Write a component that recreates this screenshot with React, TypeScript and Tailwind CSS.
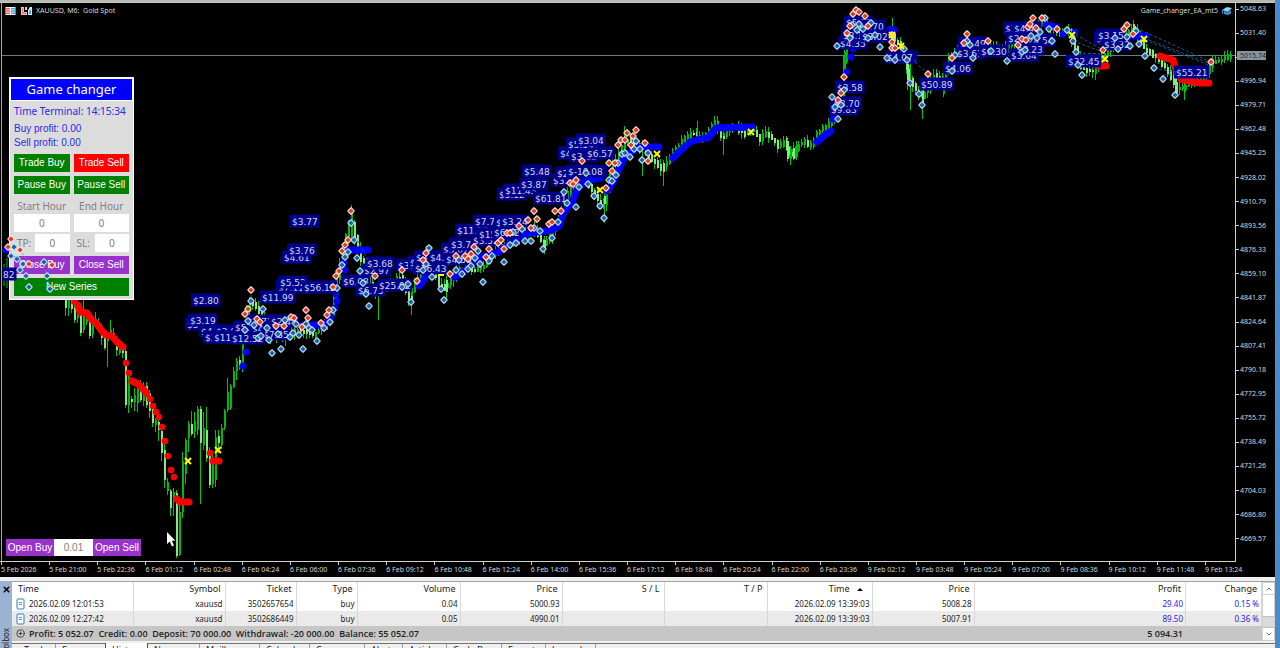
import React from "react";
import { ChevronDown, ChevronUp, CirclePlus, X } from "lucide-react";

type Point = [number, number];

const PRICES = [
  "5048.63", "5031.40", "5014.17", "4996.94", "4979.71", "4962.48", "4945.25", "4928.02",
  "4910.79", "4893.56", "4876.33", "4859.10", "4841.87", "4824.64", "4807.41", "4790.18",
  "4772.95", "4755.72", "4738.49", "4721.26", "4704.03", "4686.80", "4669.57",
];

const TIMES = [
  "5 Feb 2026", "5 Feb 21:00", "5 Feb 22:36", "6 Feb 01:12", "6 Feb 02:48", "6 Feb 04:24",
  "6 Feb 06:00", "6 Feb 07:36", "6 Feb 09:12", "6 Feb 10:48", "6 Feb 12:24", "6 Feb 14:00",
  "6 Feb 15:36", "6 Feb 17:12", "6 Feb 18:48", "6 Feb 20:24", "6 Feb 22:00", "6 Feb 23:36",
  "9 Feb 02:12", "9 Feb 03:48", "9 Feb 05:24", "9 Feb 07:00", "9 Feb 08:36", "9 Feb 10:12",
  "9 Feb 11:48", "9 Feb 13:24",
];

// x, high, low, body top, body bottom, 1 when the candle closed lower
type Candle = [number, number, number, number, number, number];

const CANDLES: Candle[] = [
  [65, 296, 316, 299, 308, 1], [68, 296, 316, 300, 308, 0], [71, 298, 313, 304, 309, 1],
  [74, 303, 323, 308, 320, 1], [77, 308, 323, 312, 318, 0], [80, 312, 336, 314, 333, 1],
  [83, 300, 333, 316, 330, 0], [86, 315, 325, 317, 322, 0], [89, 314, 339, 316, 336, 1],
  [92, 318, 338, 322, 334, 0], [95, 312, 327, 320, 325, 0], [98, 318, 332, 322, 328, 1],
  [101, 324, 345, 326, 338, 1], [104, 330, 350, 332, 348, 1], [107, 333, 367, 335, 341, 0],
  [110, 320, 338, 330, 336, 0], [113, 328, 342, 333, 339, 1], [116, 336, 356, 338, 350, 1],
  [119, 345, 355, 349, 353, 0], [122, 346, 358, 350, 353, 1], [125, 345, 408, 351, 405, 1],
  [128, 370, 413, 374, 405, 0], [131, 396, 408, 399, 402, 1], [134, 388, 411, 395, 402, 0],
  [137, 380, 412, 385, 403, 0], [140, 380, 402, 383, 400, 1], [143, 382, 406, 387, 401, 0],
  [146, 382, 408, 386, 405, 1], [149, 390, 418, 393, 411, 1], [152, 403, 427, 405, 423, 1],
  [155, 418, 432, 420, 425, 0], [158, 418, 441, 422, 430, 1], [161, 428, 461, 431, 453, 1],
  [164, 444, 488, 450, 480, 1], [167, 478, 495, 482, 491, 0], [170, 489, 516, 491, 508, 1],
  [173, 488, 516, 492, 497, 0], [176, 490, 558, 493, 556, 1], [179, 503, 556, 512, 555, 0],
  [182, 452, 518, 461, 512, 0], [185, 438, 484, 440, 474, 0], [188, 421, 452, 424, 438, 0],
  [191, 411, 436, 424, 434, 1], [194, 412, 438, 421, 432, 0], [197, 406, 435, 409, 430, 0],
  [200, 406, 504, 409, 443, 1], [203, 412, 450, 428, 445, 0], [206, 407, 462, 430, 458, 1],
  [209, 447, 488, 453, 485, 1], [212, 452, 488, 460, 484, 0], [215, 430, 487, 437, 480, 0],
  [218, 430, 453, 436, 443, 1], [221, 424, 449, 428, 445, 0], [224, 409, 430, 411, 427, 0],
  [227, 378, 412, 392, 410, 0], [230, 384, 410, 386, 408, 0], [233, 367, 388, 371, 387, 0],
  [236, 358, 380, 361, 371, 0], [239, 356, 370, 360, 366, 1], [242, 340, 372, 344, 366, 0],
];

const MID_LINE: Point[] = [
  [246, 320], [250, 300], [258, 308], [270, 335], [285, 338], [300, 330], [315, 335], [325, 325],
  [333, 312], [337, 285], [342, 260], [347, 235], [351, 216], [356, 238], [362, 260], [370, 282],
  [378, 292], [390, 285], [400, 275], [410, 298], [420, 275], [428, 252], [440, 284], [446, 288],
  [460, 268], [478, 270], [484, 266], [500, 247], [515, 240], [535, 228], [544, 245], [552, 235],
  [560, 222], [570, 190], [585, 176], [595, 195], [604, 208], [612, 172], [620, 152], [628, 140],
  [640, 146], [652, 158], [662, 170], [672, 158], [682, 142], [692, 134], [706, 136], [716, 123],
  [722, 136], [735, 126], [745, 134], [755, 130], [760, 141], [766, 133], [775, 140], [780, 148],
  [785, 141], [790, 154], [795, 155], [800, 144], [805, 141], [810, 147], [820, 131], [832, 122],
  [838, 110], [843, 92], [845, 60], [848, 36], [855, 22], [870, 26], [880, 36], [892, 35],
  [900, 45], [906, 64], [912, 82], [921, 98], [928, 90], [935, 76], [945, 82], [950, 58],
  [965, 46], [985, 46], [1000, 50], [1010, 45], [1030, 32], [1045, 22], [1060, 34], [1070, 30],
  [1076, 48], [1082, 68], [1095, 72], [1105, 56], [1120, 38], [1135, 28], [1145, 48], [1160, 60],
  [1170, 73], [1178, 90], [1195, 82], [1207, 74], [1213, 62], [1222, 60], [1230, 56],
];

const LONG_WICKS: Candle[] = [
  [351, 205, 240, 212, 237, 0], [378, 278, 320, 290, 296, 0], [411, 288, 315, 296, 303, 1],
  [446, 276, 300, 280, 292, 1], [544, 236, 254, 240, 250, 1], [604, 190, 223, 196, 204, 1],
  [624, 126, 150, 140, 146, 0], [642, 140, 176, 144, 150, 1], [663, 160, 186, 163, 172, 1],
  [697, 121, 140, 136, 139, 0], [717, 117, 134, 122, 126, 0], [723, 134, 155, 136, 139, 1],
  [787, 139, 162, 141, 159, 1], [790, 146, 165, 149, 159, 0], [793, 142, 160, 148, 159, 1],
  [796, 141, 160, 144, 157, 0], [844, 50, 96, 52, 74, 0], [892, 18, 44, 30, 40, 1],
  [907, 56, 90, 62, 80, 1], [910, 60, 110, 82, 85, 0], [922, 84, 119, 90, 104, 1],
  [943, 76, 97, 80, 94, 0], [1133, 20, 32, 24, 31, 1], [1175, 60, 96, 66, 92, 1],
  [1184, 80, 100, 86, 89, 0],
];

function noise(i: number) {
  const v = Math.sin(i * 12.9898) * 43758.5453;
  return v - Math.floor(v);
}

function midAt(x: number) {
  for (let i = 1; i < MID_LINE.length; i++) {
    const [x0, y0] = MID_LINE[i - 1];
    const [x1, y1] = MID_LINE[i];
    if (x <= x1) return y0 + ((y1 - y0) * (x - x0)) / (x1 - x0);
  }
  return MID_LINE[MID_LINE.length - 1][1];
}

const SERIES: Candle[] = Array.from({ length: 329 }, (_, i): Candle => {
  const x = 246 + i * 3;
  const before = midAt(x - 1);
  const after = midAt(x + 2);
  const top = Math.min(before, after) - noise(i) * 3;
  const bottom = Math.max(before, after) + noise(i + 400) * 3;
  return [x, top - noise(i + 90) * 6, bottom + noise(i + 700) * 6, top, bottom, after > before ? 1 : 0];
});

const BLUE_TRAILS = [
  "303,325 322,325 328,322 331,317",
  "346,250 368,250",
  "419,286 424,280 428,268",
  "455,277 468,268 478,258 490,255 500,251 516,239 530,233 552,230 559,226 563,214 572,202 577,190 585,181 600,178",
  "607,191 613,182 618,171 623,160 632,151 640,147 659,147",
  "673,158 680,151 690,142 700,139 708,138 716,128 752,127",
  "817,142 824,136 831,131",
  "1046,25 1056,27",
  "1133,36 1146,36",
];

const RED_TRAILS = [
  "78,305 80,312 87,313 91,319 96,323 102,331 106,335 112,336 117,342 123,347",
  "132,381 138,384 144,390",
  "177,499 180,502 189,502",
  "213,461 219,461",
  "1099,66 1106,66",
  "1160,56 1166,58 1173,60 1175,67 1181,79 1190,81 1200,83 1209,83",
];

const BLUE_DOTS: Point[] = [
  [246, 352], [243, 366], [330, 321], [335, 308], [337, 301], [336, 294], [345, 270], [344, 262],
  [833, 119], [836, 117], [847, 72], [851, 57], [853, 49], [890, 29], [894, 30], [1063, 34], [1075, 32],
];

const RED_DOTS: Point[] = [
  [75, 302], [126, 363], [129, 373], [132, 381], [144, 390], [147, 394], [150, 399], [153, 406],
  [156, 412], [159, 417], [162, 427], [165, 441], [168, 456], [171, 470], [174, 477], [210, 453],
];

const CROSSES: Point[] = [
  [188, 461], [218, 450], [600, 190], [657, 154], [751, 132], [892, 35], [901, 46], [1072, 35],
  [1105, 59], [1144, 39],
];

const TAGS: [string, number, number][] = [
  ["$3.77", 292, 221], ["$4.61", 284, 257], ["$3.76", 289, 250], ["$7.11", 278, 287],
  ["$5.52", 280, 282], ["$56.12", 304, 287], ["$11.99", 262, 297], ["$2.80", 193, 300],
  ["$3.41", 187, 324], ["$3.19", 190, 320], ["$4.16", 201, 331], ["$3.08", 216, 331],
  ["$3.71", 205, 337], ["$11.47", 214, 337], ["$5.19", 235, 327], ["$3.71", 247, 321],
  ["$4.12", 252, 328], ["$2.44", 271, 321], ["$7.85", 263, 334], ["$12.52", 232, 338],
  ["$2.97", 364, 270], ["$3.68", 367, 263], ["$6.08", 343, 281], ["$6.75", 358, 290],
  ["$25.92", 379, 285], ["$3.17", 398, 265], ["$4.11", 410, 262], ["$3.15", 416, 257],
  ["$16.43", 415, 268], ["$4.67", 430, 257], ["$3.07", 443, 249], ["$4.58", 446, 259],
  ["$3.74", 451, 244], ["$11.20", 457, 230], ["$3.52", 473, 240], ["$15.31", 479, 234],
  ["$6.22", 494, 232], ["$7.72", 475, 221], ["$4.61", 496, 222], ["$3.24", 502, 221],
  ["$5.12", 499, 194], ["$11.43", 505, 190], ["$3.87", 521, 184], ["$5.48", 524, 171],
  ["$3.16", 553, 180], ["$2.41", 557, 173], ["$61.81", 535, 198], ["$-10.08", 568, 171],
  ["$4.11", 560, 153], ["$3.12", 571, 156], ["$6.57", 587, 153], ["$5.14", 568, 144],
  ["$3.04", 578, 140], ["$3.58", 837, 87], ["$9.83", 831, 109], ["$3.70", 834, 103],
  ["$5.11", 846, 22], ["$4.70", 858, 26], ["$4.35", 840, 43], ["$3.11", 843, 35],
  ["$3.02", 862, 36], ["$3.91", 890, 57], ["$4.07", 887, 57], ["$50.89", 921, 84], ["$4.06", 945, 68],
  ["$2.49", 960, 43], ["$3.61", 957, 53], ["$6.30", 981, 51], ["$3.14", 1005, 28],
  ["$4.41", 1014, 28], ["$2.51", 1008, 38], ["$24.54", 1022, 40], ["$3.64", 1011, 55],
  ["$3.23", 1017, 49], ["$32.45", 1068, 61], ["$3.11", 1096, 38], ["$3.32", 1104, 44],
  ["$3.15", 1098, 35], ["$55.21", 1176, 72],
];

const SELLS: Point[] = [
  [251, 290], [248, 309], [245, 314], [257, 319], [260, 322], [276, 326], [284, 326], [291, 317],
  [294, 318], [306, 310], [308, 318], [302, 327], [321, 323], [327, 315], [329, 310], [333, 287],
  [336, 276], [339, 271], [342, 251], [345, 245], [348, 240], [351, 211], [375, 276], [402, 270],
  [417, 281], [426, 253], [423, 260], [450, 274], [456, 256], [465, 256], [468, 259], [471, 254],
  [474, 247], [486, 257], [489, 249], [498, 243], [501, 240], [504, 249], [507, 233], [510, 233],
  [519, 226], [528, 220], [534, 211], [537, 219], [531, 228], [549, 224], [552, 222], [555, 211],
  [561, 211], [570, 183], [573, 184], [576, 180], [582, 161], [606, 188], [609, 163], [615, 163],
  [612, 171], [618, 145], [621, 140], [625, 140], [627, 133], [631, 145], [633, 136], [636, 130],
  [645, 143], [648, 161], [844, 77], [841, 93], [838, 100], [847, 33], [850, 26], [853, 14],
  [856, 10], [859, 12], [865, 16], [868, 26], [892, 35], [892, 42], [892, 48], [895, 48],
  [928, 74], [952, 58], [964, 43], [967, 34], [988, 41], [1018, 45], [1022, 39], [1026, 40],
  [1028, 27], [1030, 24], [1033, 18], [1036, 28], [1042, 18], [1057, 29], [1103, 50],
  [1124, 29], [1127, 25], [1133, 34], [1211, 62],
];

const BUYS: Point[] = [
  [251, 301], [263, 309], [248, 321], [245, 330], [254, 325], [258, 338], [261, 336], [267, 328],
  [269, 340], [272, 353], [278, 334], [281, 349], [285, 320], [290, 337], [293, 333], [296, 324],
  [299, 335], [303, 349], [306, 324], [309, 328], [312, 330], [317, 341], [324, 328], [330, 322],
  [333, 310], [337, 288], [342, 265], [345, 257], [348, 252], [351, 223], [354, 240], [357, 258],
  [360, 271], [363, 283], [366, 294], [369, 306], [402, 287], [408, 284], [411, 302], [423, 270],
  [426, 264], [429, 248], [432, 277], [441, 289], [444, 300], [456, 270], [462, 274], [459, 260],
  [468, 269], [471, 266], [475, 258], [478, 251], [480, 264], [483, 282], [489, 261], [492, 256],
  [504, 262], [510, 245], [516, 243], [513, 232], [522, 229], [525, 241], [531, 241], [534, 228],
  [540, 231], [543, 249], [552, 238], [558, 222], [564, 192], [567, 203], [576, 207], [579, 187],
  [586, 173], [588, 184], [594, 196], [600, 206], [604, 218], [609, 180], [612, 181], [616, 175],
  [618, 163], [622, 154], [625, 153], [630, 157], [634, 149], [636, 141], [640, 149], [642, 160],
  [648, 153], [832, 97], [835, 107], [838, 119], [841, 105], [844, 90], [837, 46], [850, 38],
  [852, 25], [857, 30], [859, 24], [863, 29], [868, 38], [871, 23], [875, 35], [880, 47],
  [887, 58], [895, 60], [904, 49], [907, 60], [910, 83], [919, 94], [922, 105], [952, 71],
  [955, 55], [967, 41], [970, 45], [973, 58], [991, 51], [1007, 61], [1022, 52], [1025, 50],
  [1031, 36], [1037, 38], [1040, 32], [1045, 18], [1049, 29], [1052, 41], [1055, 54],
  [1067, 30], [1073, 41], [1076, 52], [1078, 65], [1082, 75], [1115, 38], [1118, 49], [1127, 37],
  [1130, 46], [1136, 31], [1139, 44], [1145, 56], [1154, 68], [1163, 79], [1175, 95],
];

const LEFT_SELLS: Point[] = [[11, 239], [8, 247], [20, 250], [29, 264], [52, 265]];
const LEFT_BUYS: Point[] = [
  [14, 247], [11, 256], [17, 259], [20, 270], [23, 264], [26, 276], [29, 287], [44, 262],
  [47, 276], [50, 289],
];

function Candles({ data }: { data: Candle[] }) {
  return (
    <g shapeRendering="crispEdges">
      {data.map(([x, high, low, top, bottom, down], i) => (
        <g key={i}>
          <rect x={x} y={high} width="1" height={low - high} fill="#00c40e" />
          <rect x={x} y={top} width="2" height={Math.max(1, bottom - top)} fill={down ? "#7dee7d" : "#00b80e"} />
        </g>
      ))}
    </g>
  );
}

function Marker({ at, kind }: { at: Point; kind: "buy" | "sell" }) {
  const [x, y] = at;
  const color = kind === "buy" ? "#1565a8" : "#e03a20";
  const ring = kind === "buy" ? "#c4dcf0" : "#ffe2da";
  return (
    <g>
      <path
        d={`M${x} ${y - 2.6}l2.6 2.6l-2.6 2.6l-2.6-2.6z`}
        fill={ring}
        stroke={ring}
        strokeWidth="2.2"
        strokeLinejoin="round"
      />
      <path d={`M${x} ${y - 2.6}l2.6 2.6l-2.6 2.6l-2.6-2.6z`} fill={color} />
    </g>
  );
}

function Tag({ text, x, y }: { text: string; x: number; y: number }) {
  return (
    <g>
      <rect x={x - 2} y={y - 6.5} width={text.length * 5.7 + 1} height="13" fill="#00008b" />
      <text x={x} y={y + 3.5} fill="#d3d8f2" className="font-['DejaVu_Sans',sans-serif] text-[9px]">
        {text}
      </text>
    </g>
  );
}

function Plot() {
  return (
    <svg viewBox="0 3 1235 558" preserveAspectRatio="xMinYMin meet" className="block h-full w-full" aria-label="XAUUSD price chart">
      <path d="M2 55.5H1236" stroke="#6d7a80" strokeWidth="1" />
      <Candles data={SERIES} />
      <Candles data={LONG_WICKS} />
      <Candles data={CANDLES} />
      <g fill="none" strokeWidth="7" strokeLinecap="round" strokeLinejoin="round">
        {BLUE_TRAILS.map((p) => <polyline key={p} points={p} stroke="#0000ff" />)}
        {RED_TRAILS.map((p) => <polyline key={p} points={p} stroke="#ff0000" />)}
      </g>
      {BLUE_DOTS.map(([x, y], i) => <circle key={i} cx={x} cy={y} r="3.5" fill="#0000ff" />)}
      {RED_DOTS.map(([x, y], i) => <circle key={i} cx={x} cy={y} r="3.3" fill="#ff0000" />)}
      {TAGS.map(([t, x, y], i) => <Tag key={i} text={t} x={x} y={y} />)}
      <path
        d="M1067 30L1103 50M1073 41L1103 52M1078 53L1103 54M1136 28L1211 62M1139 36L1211 64M1145 40L1211 66M1154 68L1176 72M1163 75L1176 74M915 62L928 74M357 240L378 278M351 211V223M251 290V301"
        fill="none"
        stroke="#17578f"
        strokeWidth="1"
        strokeDasharray="3 2"
      />
      {BUYS.map((p, i) => <Marker key={i} at={p} kind="buy" />)}
      {SELLS.map((p, i) => <Marker key={i} at={p} kind="sell" />)}
      <g stroke="#ffff00" strokeWidth="2">
        {CROSSES.map(([x, y], i) => <path key={i} d={`M${x - 3} ${y - 3}l6 6M${x + 3} ${y - 3}l-6 6`} />)}
        <path d="M438 275h6" />
      </g>
      <path d="M167 532v12l2.8-2.6l2.2 5l2-1l-2.2-4.7h3.6z" fill="#fff" />
    </svg>
  );
}

function PanelButton({ label, className }: { label: string; className: string }) {
  return (
    <button type="button" className={`h-[18px] min-w-0 flex-1 text-center font-['Liberation_Sans',sans-serif] text-[10px] leading-[18px] whitespace-nowrap text-white ${className}`}>
      {label}
    </button>
  );
}

const FIELD = "h-[18px] w-full min-w-0 bg-white text-center text-[10px] text-[#808080] outline-none";

function ControlPanel() {
  return (
    <section className="absolute top-[74px] left-[9px] w-[125px] border border-white bg-[#dcdcdc] pb-[3px]">
      <h1 className="border border-white bg-[#0000ff] text-center font-['Noto_Sans',sans-serif] text-[13px] leading-[21px] text-white">
        Game changer
      </h1>
      <div className="flex flex-col gap-1 px-1 pt-[3px]">
        <p className="font-['Noto_Sans',sans-serif] text-[10px] leading-[14px] whitespace-nowrap text-[#2a2ae6]">Time Terminal: 14:15:34</p>
        <div className="font-['Liberation_Sans',sans-serif] text-[10px] leading-[14px] text-[#2a2ae6]">
          <p>Buy profit: 0.00</p>
          <p>Sell profit: 0.00</p>
        </div>
        <div className="flex gap-1">
          <PanelButton label="Trade Buy" className="bg-[#008000]" />
          <PanelButton label="Trade Sell" className="bg-[#ff0000]" />
        </div>
        <div className="flex gap-1">
          <PanelButton label="Pause Buy" className="bg-[#008000]" />
          <PanelButton label="Pause Sell" className="bg-[#008000]" />
        </div>
        <div className="flex gap-1 text-center font-['Noto_Sans',sans-serif] text-[10px] text-[#808080]">
          <label className="flex-1 leading-4">
            Start Hour
            <input className={FIELD} defaultValue="0" />
          </label>
          <label className="flex-1 leading-4">
            End Hour
            <input className={FIELD} defaultValue="0" />
          </label>
        </div>
        <div className="-mt-[3px] flex gap-1 font-['Noto_Sans',sans-serif] text-[10px] text-[#808080]">
          <label className="flex flex-1 items-center pt-px pl-[3px]">
            <span className="w-[18px] shrink-0">TP:</span>
            <input className={FIELD} defaultValue="0" />
          </label>
          <label className="flex flex-1 items-center pt-px pl-[3px]">
            <span className="w-[18px] shrink-0">SL:</span>
            <input className={FIELD} defaultValue="0" />
          </label>
        </div>
        <div className="flex gap-1">
          <PanelButton label="Close Buy" className="bg-[#9932cc]" />
          <PanelButton label="Close Sell" className="bg-[#9932cc]" />
        </div>
        <div className="flex">
          <PanelButton label="New Series" className="bg-[#008000]" />
        </div>
      </div>
    </section>
  );
}

function Chart() {
  return (
    <main className="flex min-h-0 flex-1 flex-col bg-black font-['Noto_Sans',sans-serif] text-[7px] text-[#d8d8d8]">
      <div className="h-[2px] shrink-0 bg-[#b4baae]" />
      <div className="flex min-h-0 flex-1 border-t border-[#c8c8c8]">
        <div className="relative min-w-0 flex-1 border-r border-b border-[#d0d0d0]">
          <Plot />
          <div className="absolute inset-y-0 left-px w-px bg-[#a8a8a8]" />
          <div className="absolute top-[3px] left-[5px] flex items-center gap-1 leading-[10px] whitespace-pre">
            <svg viewBox="0 0 27 10" className="h-[10px] w-[27px]" aria-hidden="true">
              <rect x="0.5" y="1" width="10" height="8" fill="#f4f4f4" />
              <path d="M1 2h4v1.4H1zM1 4.3h4v1.4H1zM1 6.6h4V8H1z" fill="#e86a5c" />
              <path d="M6 2h4v1.4H6zM6 4.3h4v1.4H6zM6 6.6h4V8H6z" fill="#4ba3dd" />
              <path d="M16 1h3v5h3v3h-6z" fill="#f9c4bd" />
              <path d="M17 2h1v5h3v1h-4z" fill="#e86a5c" />
              <path d="M20 1h2v3h-2z" fill="#f9c4bd" />
              <path d="M27 1h-2l-2 3v5h4z" fill="#d8ecfa" />
              <path d="M26 3v5h-2V5z" fill="#4ba3dd" />
            </svg>
            <span>XAUUSD, M6:  Gold Spot</span>
          </div>
          <div className="absolute top-[3px] right-[3px] flex items-center gap-1 leading-[10px]">
            <span>Game_changer_EA_mt5</span>
            <svg viewBox="0 0 10 10" className="h-[10px] w-[10px]" aria-hidden="true">
              <path d="M0 4l5-3l5 1l-4 4z" fill="#8fd0f5" />
              <path d="M2 5l4 1.5L9 4v3.5L6 9L2 8z" fill="#3b93d6" />
              <path d="M0.5 4v4" stroke="#3b93d6" />
            </svg>
          </div>
          <ControlPanel />
          <div className="absolute bottom-[5px] left-[6px] flex h-[17px] w-[135px] font-['Liberation_Sans',sans-serif] text-[10px] leading-[17px] whitespace-nowrap text-white">
            <button type="button" className="w-12 bg-[#9932cc]">Open Buy</button>
            <input aria-label="Lot size" defaultValue="0.01" className="w-[39px] bg-white text-center text-[#808080] outline-none" />
            <button type="button" className="w-12 bg-[#9932cc]">Open Sell</button>
          </div>
          <svg viewBox="0 3 1235 558" preserveAspectRatio="xMinYMin meet" className="pointer-events-none absolute inset-0 h-full w-full" aria-hidden="true">
            <path d="M4 264v22M7 258v30" stroke="#00b80c" />
            <circle cx="6" cy="250" r="3.5" fill="#0000ff" />
            <path d="M29 264L20 270M44 262L50 289M52 265L47 276M20 250L29 264" stroke="#5b8fc9" strokeDasharray="2 2" />
            <rect x="2.5" y="267.5" width="14" height="13" fill="#00008b" />
            <text x="3" y="277.5" fill="#d3d8f2" className="font-['DejaVu_Sans',sans-serif] text-[9px]">82</text>
            {LEFT_BUYS.map((p, i) => <Marker key={i} at={p} kind="buy" />)}
            {LEFT_SELLS.map((p, i) => <Marker key={i} at={p} kind="sell" />)}
          </svg>
        </div>
        <div className="relative flex w-[39px] shrink-0 flex-col justify-between pt-px pb-[18px]">
          {PRICES.map((p) => (
            <div key={p} className="flex items-center gap-px leading-[10px]">
              <span className="h-px w-[3px] bg-[#d0d0d0]" />
              <span>{p}</span>
            </div>
          ))}
          <div className="absolute top-[48px] left-px w-[29px] bg-[#8793a0] pl-[3px] leading-[9px] text-[#1c2630]">5015.74</div>
        </div>
      </div>
      <div className="flex h-[15px] shrink-0 pr-[22px] pl-px">
        {TIMES.map((t) => (
          <div key={t} className="min-w-0 flex-1 whitespace-nowrap">
            <div className="h-[3px] w-px bg-[#d0d0d0]" />
            <div className="leading-[9px]">{t}</div>
          </div>
        ))}
      </div>
    </main>
  );
}

const COLUMNS = ["Time", "Symbol", "Ticket", "Type", "Volume", "Price", "S / L", "T / P", "Time", "Price", "Profit", "Change"];

const ROWS = [
  ["2026.02.09 12:01:53", "xauusd", "3502657654", "buy", "0.04", "5000.93", "", "", "2026.02.09 13:39:03", "5008.28", "29.40", "0.15 %"],
  ["2026.02.09 12:27:42", "xauusd", "3502686449", "buy", "0.05", "4990.01", "", "", "2026.02.09 13:39:03", "5007.91", "89.50", "0.36 %"],
];

const TABS: [string, string][] = [
  ["Trade", "w-[38px]"],
  ["Exposure", "w-[49px]"],
  ["History", "w-[43px]"],
  ["News", "w-[52px]"],
  ["Mailbox", "w-[60px]"],
  ["Calendar", "w-[50px]"],
  ["Company", "w-[55px]"],
  ["Alerts", "w-[38px]"],
  ["Articles", "w-[44px]"],
  ["Code Base", "w-[55px]"],
  ["Experts", "w-[44px]"],
  ["Journal", "w-[50px]"],
];

function Toolbox() {
  return (
    <section className="flex h-[71px] shrink-0 overflow-hidden bg-[#f0f0f0] pt-1 font-['Noto_Sans',sans-serif] text-[#222]">
      <div className="flex w-3 shrink-0 flex-col items-center justify-between bg-[#9bb3d3]">
        <button type="button" aria-label="Close toolbox" className="pt-1">
          <X className="h-[9px] w-[9px] text-black" strokeWidth={4} />
        </button>
        <span className="-mb-[9px] rotate-180 text-[8px] leading-3 [writing-mode:vertical-rl]">Toolbox</span>
      </div>
      <div className="min-w-0 flex-1">
        <div className="flex border-t border-[#a0a0a0]">
          <div className="min-w-0 flex-1">
            <table className="w-full table-fixed border-collapse bg-white text-right">
              <colgroup>
                <col className="w-[121px]" />
                <col className="w-[92px]" />
                <col className="w-[71px]" />
                <col className="w-[61px]" />
                <col className="w-[103px]" />
                <col className="w-[102px]" />
                <col className="w-[102px]" />
                <col className="w-[103px]" />
                <col className="w-[105px]" />
                <col className="w-[102px]" />
                <col />
                <col className="w-[76px]" />
              </colgroup>
              <thead>
                <tr className="h-[14px] text-[9px] leading-[14px]">
                  {COLUMNS.map((c, i) => (
                    <th key={i} className={`border-r border-[#d8d8d8] p-0 font-normal ${i === 0 ? "pl-[6px] text-left" : "pr-1"}`}>
                      {c}
                      {i === 8 && <span className="mr-[5px] ml-[7px] inline-block h-0 w-0 border-x-[3px] border-b-[3px] border-x-transparent border-b-black align-middle" />}
                    </th>
                  ))}
                </tr>
              </thead>
              <tbody>
                {ROWS.map((row, r) => (
                  <tr key={r} className={`h-[15px] text-[8px] leading-[14px] ${r === 1 ? "bg-[#eaeaea]" : "bg-white"}`}>
                    {row.map((cell, i) => (
                      <td key={i} className={`border-r border-[#d8d8d8] p-0 ${i === 0 ? "pl-1 text-left" : "pr-[2px]"} ${i > 9 ? "text-[#2a22e0]" : ""}`}>
                        {i === 0 ? (
                          <span className="flex items-center gap-1">
                            <svg viewBox="0 0 9 12" className="h-3 w-[9px]" aria-hidden="true">
                              <rect x="1" y="1" width="7" height="10" rx="1" fill="#fff" stroke="#2b7fb8" />
                              <path d="M3 4.5h3M3 6.5h3" stroke="#2b7fb8" strokeWidth="0.8" />
                            </svg>
                            {cell}
                          </span>
                        ) : (
                          cell
                        )}
                      </td>
                    ))}
                  </tr>
                ))}
              </tbody>
            </table>
            <div className="flex h-[15px] items-center justify-between bg-[#c6c6c6] pr-[79px] pl-1 font-['Open_Sans',sans-serif] text-[9px] leading-[14px] font-semibold whitespace-pre">
              <span className="flex items-center gap-1">
                <CirclePlus className="h-[9px] w-[9px]" strokeWidth={2} />
                Profit: 5 052.07  Credit: 0.00  Deposit: 70 000.00  Withdrawal: -20 000.00  Balance: 55 052.07
              </span>
              <span>5 094.31</span>
            </div>
          </div>
          <div className="flex w-[13px] shrink-0 flex-col border border-[#d0d0d0] bg-white">
            <button type="button" aria-label="Scroll up" className="flex h-3 items-center justify-center border-b border-[#d0d0d0]">
              <ChevronUp className="h-2 w-2" />
            </button>
            <div className="flex-1" />
            <div className="h-3 border-y border-[#c0c0c0] bg-[#dadada]" />
            <button type="button" aria-label="Scroll down" className="flex h-3 items-center justify-center">
              <ChevronDown className="h-2 w-2" />
            </button>
          </div>
        </div>
        <nav className="mt-[2px] flex border-t border-[#707070] pl-[6px] text-[9px] leading-3">
          {TABS.map(([name, width]) => (
            <a
              key={name}
              href="#"
              className={`pl-[6px] whitespace-nowrap ${width} ${name === "History" ? "-mt-px border-x border-[#505050] bg-white pt-px" : name === "Exposure" ? "" : "border-r border-[#a0a0a0]"}`}
            >
              {name}
            </a>
          ))}
        </nav>
      </div>
    </section>
  );
}

export default function App() {
  return (
    <div className="flex h-screen overflow-hidden bg-[#4a8ccb]">
      <div className="flex min-w-0 flex-1 flex-col">
        <Chart />
        <Toolbox />
      </div>
      <div className="w-[5px] shrink-0 bg-[#4a8ccb]" />
    </div>
  );
}
